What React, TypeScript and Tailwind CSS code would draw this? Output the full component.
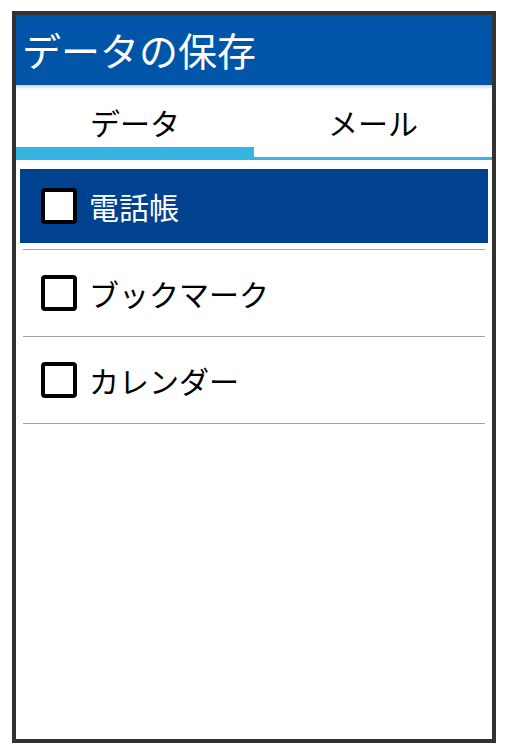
import React from "react";

const font = { fontFamily: '"Noto Sans CJK JP", "Noto Sans", sans-serif' };

function Row({ label, selected }: { label: string; selected?: boolean }) {
  return (
    <div>
      <div className="py-[6px]">
        <div
          className={`h-[74px] flex items-center pl-[21px] ${
            selected ? "bg-[#00428f] text-white" : "text-black"
          }`}
        >
          <div className="w-[36px] h-[36px] border-[4px] border-black rounded-[4px] bg-white shrink-0" />
          <span className="ml-[12px] text-[30px] leading-none">{label}</span>
        </div>
      </div>
      <div className="h-px bg-[#a0a4a6] mx-[3px]" />
    </div>
  );
}

export default function App() {
  return (
    <div className="w-[507px] h-[753px] bg-white pt-[11px] pl-[12px]" style={font}>
      <div className="w-[484px] h-[732px] border-[4px] border-[#333333] bg-white flex flex-col">
        <div className="h-[70px] bg-[#0055a8] flex items-center pl-[6px] pb-[2px] shrink-0">
          <span className="text-white text-[39px] leading-none">データの保存</span>
        </div>
        <div className="h-[4px] bg-gradient-to-b from-[#d0d0d0] to-white shrink-0" />
        <div className="flex h-[71px] shrink-0">
          <div className="w-[238px] flex flex-col">
            <div className="h-[58px] pt-[8px] flex items-center justify-center text-[30px] leading-none text-black">
              データ
            </div>
            <div className="h-[13px] bg-[#36b4e4]" />
          </div>
          <div className="flex-1 flex flex-col">
            <div className="h-[58px] pt-[8px] flex items-center justify-center text-[30px] leading-none text-black">
              メール
            </div>
            <div className="h-[10px]" />
            <div className="h-[3px] bg-[#36b4e4]" />
          </div>
        </div>
        <div className="pt-[3px] px-[4px]">
          <Row label="電話帳" selected />
          <Row label="ブックマーク" />
          <Row label="カレンダー" />
        </div>
      </div>
    </div>
  );
}
